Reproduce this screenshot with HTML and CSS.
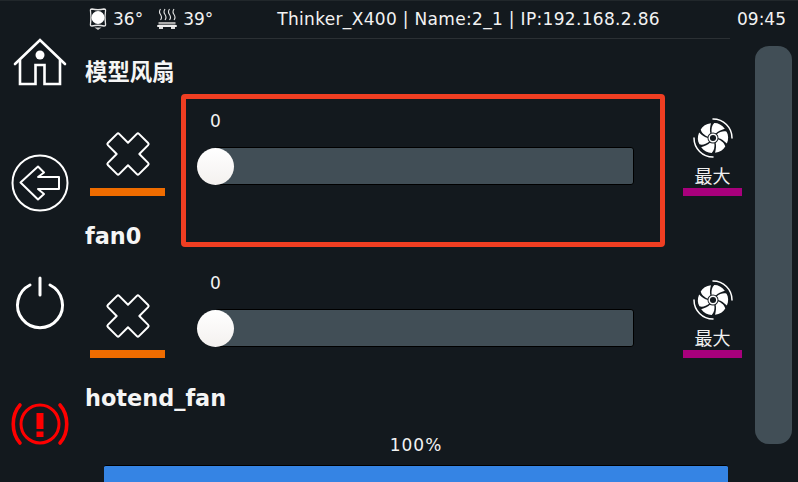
FILE: index.html
```html
<!DOCTYPE html>
<html lang="en">

<head>
    <meta charset="UTF-8">
    <meta name="viewport" content="width=device-width, initial-scale=1.0">
    <title>Thinker_X400 fan control</title>
    <link rel="stylesheet" href="styles.css">
</head>

<body>
    <svg class="defs" width="0" height="0" aria-hidden="true">
        <symbol id="icon-off" viewBox="-25 -25 50 50">
            <path d="M-8 -8 V-20.500 Q-8 -22 -6.500 -22 H6.500 Q8 -22 8 -20.500 V-8 H20.500 Q22 -8 22 -6.500 V6.500 Q22 8 20.500 8 H8 V20.500 Q8 22 6.500 22 H-6.500 Q-8 22 -8 20.500 V8 H-20.500 Q-22 8 -22 6.500 V-6.500 Q-22 -8 -20.500 -8 Z"
                transform="rotate(45)" fill="none" stroke="#fff" stroke-width="2" stroke-linejoin="round" />
        </symbol>
        <symbol id="icon-fan" viewBox="-20 -20 40 40">
            <g fill="#fff">
                <path id="b" d="M-1.300 -4.800 C-2 -9 -1 -13 1.300 -14.900 C5 -15 9 -13 11.800 -9.200 C8 -8 5 -7 2.500 -4.300 Z" />
                <use href="#b" transform="rotate(60)" />
                <use href="#b" transform="rotate(120)" />
                <use href="#b" transform="rotate(180)" />
                <use href="#b" transform="rotate(240)" />
                <use href="#b" transform="rotate(300)" />
            </g>
            <circle r="5.500" fill="#13191e" />
            <circle r="3.800" fill="none" stroke="#fff" stroke-width="1.500" />
            <path d="M0 -19 A19 19 0 0 1 19 0 M0 19 A19 19 0 0 1 -19 0" fill="none" stroke="#fff" stroke-width="1.500" stroke-linecap="round" />
        </symbol>
    </svg>

    <div class="screen">
        <nav class="side">
            <div class="side-item">
                <svg width="56" height="50" viewBox="0 0 56 50">
                    <path d="M3 27 L28 3 L53 27" fill="none" stroke="#fff" stroke-width="2.600" stroke-linecap="round" />
                    <path d="M8 23 V47 H23.500 V28 H32.500 V47 H48 V23" fill="none" stroke="#fff" stroke-width="2.600" />
                    <circle cx="28" cy="18" r="4.500" fill="#fff" />
                </svg>
            </div>
            <div class="side-item">
                <svg width="58" height="58" viewBox="0 0 58 58">
                    <circle cx="29" cy="29" r="27.500" fill="none" stroke="#fff" stroke-width="2" />
                    <path d="M9.500 28.500 L27 12.500 L33 18.500 L27 23 H48 V35 H27 L33 40 L27 45.500 Z" fill="none" stroke="#fff" stroke-width="2" stroke-linejoin="round" />
                </svg>
            </div>
            <div class="side-item">
                <svg width="52" height="54" viewBox="0 0 52 54">
                    <path d="M16 9 A22.500 22.500 0 1 0 36 9" fill="none" stroke="#fff" stroke-width="3" stroke-linecap="round" />
                    <path d="M26 2 V19" fill="none" stroke="#fff" stroke-width="3" stroke-linecap="round" />
                </svg>
            </div>
            <div class="side-item">
                <svg width="60" height="46" viewBox="0 0 60 46">
                    <circle cx="30" cy="23" r="19" fill="none" stroke="#f00" stroke-width="3" />
                    <path d="M10 4 C1 14 1 32 10 42 M50 4 C59 14 59 32 50 42" fill="none" stroke="#f00" stroke-width="3.600" stroke-linecap="round" />
                    <path d="M26.500 12 H33.500 V28 H26.500 Z" fill="#f00" />
                    <rect x="26.500" y="30.500" width="7" height="5.500" fill="#f00" />
                </svg>
            </div>
        </nav>

        <div class="content">
            <header class="topbar">
                <svg class="temp-icon" width="18" height="24" viewBox="0 0 18 24">
                    <circle cx="9" cy="10.500" r="6.500" fill="#fff" />
                    <path d="M3 2 Q9 3.500 15 2 Q17 2 16.500 4 Q15.500 10.500 16.500 17 Q17 19 15 19 Q9 17.500 3 19 Q1 19 1.500 17 Q2.500 10.500 1.500 4 Q1 2 3 2 Z" fill="none" stroke="#e6e6e6" stroke-width="1.300" />
                    <path d="M5.500 20.500 H12.500 L9 23 Z" fill="#ccc" />
                </svg>
                <span class="temp">36°</span>
                <svg class="temp-icon bed" width="22" height="22" viewBox="0 0 22 22">
                    <path d="M4.500 1 q-2 3 0 5.500 q2 3 0 5.500 M9 1 q-2 3 0 5.500 q2 3 0 5.500 M13.500 1 q-2 3 0 5.500 q2 3 0 5.500 M18 1 q-2 3 0 5.500 q2 3 0 5.500" fill="none" stroke="#e6e6e6" stroke-width="1.100" />
                    <rect x="2.500" y="14" width="17" height="2.500" fill="#aaa" />
                    <rect x="1" y="17" width="20" height="2" rx="1" fill="#eee" />
                    <path d="M3 20 H7 M15 20 H19" stroke="#ddd" stroke-width="2" />
                </svg>
                <span class="temp">39°</span>
                <span class="machine">Thinker_X400 | Name:2_1 | IP:192.168.2.86</span>
                <span class="clock">09:45</span>
            </header>
            <div class="topbar-line"></div>

            <div class="body">
                <main class="main">
                    <div class="fans">
                        <section class="fan">
                            <h2 class="fan-title cjk">模型风扇</h2>
                            <div class="fan-off">
                                <svg class="off-icon"><use href="#icon-off" /></svg>
                                <div class="fan-bar off-bar"></div>
                            </div>
                            <div class="slider-box selected">
                                <div class="slider-value">0</div>
                                <div class="slider">
                                    <div class="slider-track"></div>
                                    <div class="slider-knob"></div>
                                </div>
                            </div>
                            <div class="fan-max">
                                <svg class="max-icon"><use href="#icon-fan" /></svg>
                                <div class="max-label">最大</div>
                                <div class="fan-bar max-bar"></div>
                            </div>
                        </section>

                        <section class="fan">
                            <h2 class="fan-title">fan0</h2>
                            <div class="fan-off">
                                <svg class="off-icon"><use href="#icon-off" /></svg>
                                <div class="fan-bar off-bar"></div>
                            </div>
                            <div class="slider-box">
                                <div class="slider-value">0</div>
                                <div class="slider">
                                    <div class="slider-track"></div>
                                    <div class="slider-knob"></div>
                                </div>
                            </div>
                            <div class="fan-max">
                                <svg class="max-icon"><use href="#icon-fan" /></svg>
                                <div class="max-label">最大</div>
                                <div class="fan-bar max-bar"></div>
                            </div>
                        </section>

                        <section class="fan">
                            <h2 class="fan-title">hotend_fan</h2>
                        </section>
                    </div>

                    <footer class="progress">
                        <div class="progress-label">100%</div>
                        <div class="progress-bar"></div>
                    </footer>
                </main>
                <div class="scrollbar"></div>
            </div>
        </div>
    </div>
</body>

</html>
```

FILE: styles.css
```css
html,
body {
    margin: 0;
    padding: 0;
    background-color: #13191e;
}

.defs {
    position: absolute;
}

.screen {
    display: flex;
    width: 798px;
    height: 482px;
    overflow: hidden;
    background-color: #13191e;
    box-shadow: inset 0 1px 0 #21272b;
    color: #fff;
    font-family: "DejaVu Sans", "Noto Sans CJK SC", sans-serif;
}

/* left column */
.side {
    width: 80px;
    flex: none;
    padding-top: 2px;
}

.side-item {
    display: flex;
    align-items: center;
    justify-content: center;
    height: 120.500px;
}

/* status line */
.content {
    flex: 1;
    display: flex;
    flex-direction: column;
    min-width: 0;
}

.topbar {
    display: flex;
    align-items: center;
    height: 38px;
    padding-left: 9px;
    font-size: 17px;
    color: #f2f2f2;
}

.temp-icon {
    flex: none;
    margin-right: 6px;
}

.temp-icon.bed {
    margin-left: 13px;
    margin-right: 5px;
}

.machine {
    margin-left: 64px;
    letter-spacing: 0.320px;
    white-space: nowrap;
}

.clock {
    margin-left: auto;
    margin-right: 12px;
}

.topbar-line {
    height: 1px;
    margin: 0 68px 0 20px;
    background-color: #2b3034;
}

.body {
    flex: 1;
    display: flex;
    min-height: 0;
}

.main {
    width: 675px;
    flex: none;
    display: flex;
    flex-direction: column;
}

.fans {
    height: 393px;
    padding-top: 18px;
    box-sizing: border-box;
}

/* one fan */
.fan {
    display: grid;
    grid-template-columns: 100.500px 484.500px 1fr;
    grid-template-rows: 30px 132px;
}

.fan-title {
    grid-column: 1 / 4;
    margin: 2px 0 0 5px;
    font-size: 22.400px;
    font-weight: bold;
    line-height: 30px;
    color: #f5f5f5;
}

.fan-title.cjk {
    margin-top: 0;
}

.fan-off {
    display: flex;
    flex-direction: column;
    align-items: center;
    width: 75px;
    margin-left: 10px;
    padding-top: 42px;
}

.off-icon {
    width: 50px;
    height: 50px;
}

.fan-bar {
    height: 8px;
}

.off-bar {
    width: 75px;
    margin-top: 9px;
    background-color: #ef6c00;
}

.slider-box {
    height: 153px;
    margin-top: 7px;
    padding: 0 26.500px 0 11.500px;
    box-sizing: border-box;
    border: 5px solid transparent;
    border-radius: 4px;
}

.slider-box.selected {
    border-color: #f03e22;
}

.slider-value {
    width: 37px;
    height: 48px;
    padding-top: 12px;
    box-sizing: border-box;
    font-size: 17px;
    line-height: 20px;
    text-align: center;
    color: #f2f2f2;
}

.slider {
    position: relative;
    height: 38px;
}

.slider-track {
    height: 36px;
    margin-left: 18px;
    border: 1px solid #000;
    border-radius: 3px;
    background-color: #414e56;
}

.slider-knob {
    position: absolute;
    top: 1px;
    left: 0;
    width: 37px;
    height: 37px;
    border-radius: 50%;
    background: linear-gradient(#fff, #f4f1ef);
}

.fan-max {
    display: flex;
    flex-direction: column;
    align-items: center;
    width: 59px;
    margin-left: 18px;
    padding-top: 31px;
}

.max-icon {
    width: 40px;
    height: 40px;
}

.max-label {
    height: 30px;
    font-size: 18px;
    line-height: 38px;
    color: #f0f0f0;
}

.max-bar {
    width: 59px;
    background-color: #a8007c;
}

/* bottom progress */
.progress {
    flex: 1;
    padding-left: 24px;
}

.progress-label {
    width: 624px;
    height: 33px;
    font-size: 17px;
    letter-spacing: 1px;
    line-height: 27px;
    text-align: center;
    color: #f2f2f2;
}

.progress-bar {
    width: 624px;
    height: 16px;
    border-top: 1px solid #000;
    border-radius: 2px 2px 0 0;
    background-color: #3584e4;
}

.scrollbar {
    width: 37px;
    height: 398px;
    margin: 7px 0 0 0;
    border-radius: 14px;
    background-color: #414e56;
}
```
